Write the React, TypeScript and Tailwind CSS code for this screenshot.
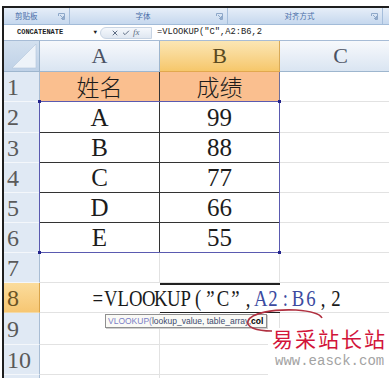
import { Check, X } from "lucide-react"

const table = [
  { n: 1, h: "h-[30px]", a: "姓名", b: "成绩" },
  { n: 2, h: "h-[31px]", a: "A", b: "99" },
  { n: 3, h: "h-[30px]", a: "B", b: "88" },
  { n: 4, h: "h-[30px]", a: "C", b: "77" },
  { n: 5, h: "h-[30px]", a: "D", b: "66" },
  { n: 6, h: "h-[30px]", a: "E", b: "55" },
]

const formula = [
  { t: "=VLOOKUP(”C”,", blue: false },
  { t: "A2:B6", blue: true },
  { t: ",2", blue: false },
].flatMap((s) => [...s.t].map((c) => ({ c, blue: s.blue })))

function Launcher() {
  return (
    <svg width="7" height="7" viewBox="0 0 7 7" className="shrink-0">
      <path d="M0.5 3V0.5H6.5V6.5H4" fill="none" stroke="#8ea8c9" strokeWidth="1" />
      <path d="M2 2L5.5 5.5M5.5 3V5.5H3" fill="none" stroke="#8ea8c9" strokeWidth="1" />
    </svg>
  )
}

function RowHead({ n, active }: { n?: number; active?: boolean }) {
  return (
    <div
      className={`flex w-[36px] shrink-0 items-center border-r border-b pl-[3px] text-[24px] leading-none ${
        active
          ? "border-r-[#d9a44a] border-b-[#f3d9a6] bg-gradient-to-b from-[#fbdc9c] to-[#f6c672] text-[#6a5424]"
          : "border-r-[#a9bdd4] border-b-[#f4f7fb] bg-[#e0e9f4] text-[#5a5a5a]"
      }`}
    >
      {n}
    </div>
  )
}

function EmptyRow({ n, h }: { n?: number; h: string }) {
  return (
    <div className={`flex ${h}`}>
      <RowHead n={n} />
      <div className="w-[120px] shrink-0 border-r border-b border-[#e2e2e2]" />
      <div className="w-[120px] shrink-0 border-r border-b border-[#e2e2e2]" />
      <div className="w-[121px] shrink-0 border-b border-[#e2e2e2]" />
    </div>
  )
}

export default function App() {
  return (
    <div className="relative h-[378px] w-[389px] overflow-hidden bg-white font-['Liberation_Serif','Noto_Sans_CJK_SC',serif]">
      <div className="h-[6px] bg-white" />
      <div className="ml-[2px] border-t-2 border-l-2 border-[#1e1e1e]">
        {/* ribbon group captions */}
        <div className="flex h-[17px] border-b border-[#a2bbd8] bg-gradient-to-b from-[#e6eef8] to-[#c6d8ee] font-['Noto_Sans_CJK_SC',sans-serif] text-[7.5px] leading-none text-[#4a6ea8]">
          <div className="flex w-[66px] items-center border-r border-[#a6bedb] pl-[11px] pr-[4px]">
            <span className="flex-1">剪贴板</span>
            <Launcher />
          </div>
          <div className="flex w-[158px] items-center border-r border-[#a6bedb] pr-[4px]">
            <span className="flex-1 text-center">字体</span>
            <Launcher />
          </div>
          <div className="flex w-[155px] items-center border-r border-[#a6bedb] pr-[4px]">
            <span className="flex-1 text-center">对齐方式</span>
            <Launcher />
          </div>
        </div>

        {/* formula bar */}
        <div className="flex h-[16px] items-center border-b border-[#a7bcd6] bg-white">
          <div className="flex w-[96px] items-center pl-[13px] pr-[3px] font-['Liberation_Mono',monospace] text-[7px] font-bold leading-none text-[#1e1e1e]">
            <span className="flex-1">CONCATENATE</span>
            <span className="text-[6px]">▼</span>
          </div>
          <div className="flex h-[12px] w-[52px] items-center gap-[3px] rounded-l-full border border-[#c8d4e3] bg-gradient-to-b from-[#f5f8fc] to-[#dfe7f1] pl-[10px] text-[#5e6d84]">
            <X size={8} strokeWidth={3} />
            <Check size={8} strokeWidth={3} />
            <span className="text-[9px] italic leading-none">fx</span>
          </div>
          <div className="pl-[5px] font-['Liberation_Mono',monospace] text-[8.75px] leading-none text-[#222]">
            =VLOOKUP("C",A2:B6,2
          </div>
        </div>

        {/* column headers */}
        <div className="flex h-[31px] text-[22px] leading-none">
          <div className="relative w-[36px] shrink-0 border-r border-b border-[#9eb6ce] bg-gradient-to-b from-[#d3e0ef] to-[#bfd1e7]">
            <svg width="36" height="30" viewBox="0 0 36 30" className="absolute inset-0">
              <path d="M8 27L32 3V27Z" fill="#eef3f9" stroke="#b3c6dc" strokeWidth="0.6" />
            </svg>
          </div>
          <div className="flex w-[120px] shrink-0 items-center justify-center border-r border-b border-[#9eb6ce] bg-gradient-to-b from-[#f7f9fc] to-[#dae5f2] text-[#4b5263]">
            A
          </div>
          <div className="flex w-[120px] shrink-0 items-center justify-center border-r border-b border-r-[#d8aa58] border-b-[#e2a84e] bg-gradient-to-b from-[#fbe6b4] to-[#f6c76a] text-[#5b4a20]">
            B
          </div>
          <div className="flex w-[121px] shrink-0 items-center justify-center border-b border-[#9eb6ce] bg-gradient-to-b from-[#f7f9fc] to-[#dae5f2] text-[#4b5263]">
            C
          </div>
        </div>

        {/* sheet body */}
        <div className="relative">
          {table.map((r) => (
            <div key={r.n} className={`flex ${r.h}`}>
              <RowHead n={r.n} />
              <div
                className={`flex w-[120px] shrink-0 items-center justify-center border-r border-b border-[#333] leading-none text-[#1c1c1c] ${
                  r.n === 1 ? "bg-[#fabf8f] font-['Noto_Sans_CJK_SC',serif] text-[23px] font-light" : "text-[25px]"
                }`}
              >
                {r.a}
              </div>
              <div
                className={`flex w-[120px] shrink-0 items-center justify-center border-r border-b border-r-[#6f6f9a] border-b-[#333] leading-none text-[#1c1c1c] ${
                  r.n === 1 ? "bg-[#fabf8f] font-['Noto_Sans_CJK_SC',serif] text-[23px] font-light" : "text-[25px]"
                }`}
              >
                {r.b}
              </div>
              <div className="w-[121px] shrink-0 border-b border-[#e2e2e2]" />
            </div>
          ))}

          {/* range reference A2:B6 */}
          <div className="pointer-events-none absolute top-[29px] left-[35px] h-[152px] w-[241px] border border-[#5a5ab0]">
            <span className="absolute -top-[2px] -left-[2px] h-[3px] w-[3px] bg-[#23238c]" />
            <span className="absolute -top-[2px] -right-[2px] h-[3px] w-[3px] bg-[#23238c]" />
            <span className="absolute -bottom-[2px] -left-[2px] h-[3px] w-[3px] bg-[#23238c]" />
            <span className="absolute -right-[2px] -bottom-[2px] h-[3px] w-[3px] bg-[#23238c]" />
          </div>

          <EmptyRow n={7} h="h-[30px]" />

          {/* row 8, editing B8 */}
          <div className="relative flex h-[30px]">
            <RowHead n={8} active />
            <div className="w-[120px] shrink-0 border-b border-[#e2e2e2]" />
            <div className="w-[120px] shrink-0 border-t-2 border-b border-[#222]" />
            <div className="w-[121px] shrink-0 border-b border-[#e2e2e2]" />
            <div className="absolute top-0 left-[88px] flex h-full items-center text-[24px] leading-none text-[#1a1a1a]">
              {formula.map((ch, i) => (
                <span key={i} className={`flex w-[12.5px] justify-center ${ch.blue ? "text-[#3b4aa0]" : ""}`}>
                  <span className="inline-block scale-x-[0.78]">{ch.c}</span>
                </span>
              ))}
            </div>
          </div>

          <div className="relative">
            <EmptyRow n={9} h="h-[32px]" />
            <div className="absolute top-[1px] left-[101px] flex h-[14px] items-center border border-[#8f8f8f] bg-[#fafaf6] pr-[3px] pl-[2px] font-['Liberation_Sans',sans-serif] text-[8.5px] leading-none text-[#3c4a6e] shadow-[1px_1px_0_#cfcfcf]">
              <span className="text-[#7b80c6]">VLOOKUP(</span>
              <span>lookup_value, table_array, </span>
              <span className="font-bold text-black">col</span>
            </div>
          </div>
          <EmptyRow n={10} h="h-[30px]" />
          <EmptyRow h="h-[30px]" />
        </div>
      </div>

      {/* site watermark */}
      <div className="absolute top-[328px] left-[268px] h-[50px] w-[121px] bg-white">
        <div className="pl-[4px] font-['Noto_Sans_CJK_SC',serif] text-[21px] leading-none tracking-[2px] text-[#d2143a]">
          易采站长站
        </div>
        <div className="mt-[5px] pl-[7px] font-['Liberation_Mono',monospace] text-[14px] leading-none text-[#a3a3a3]">
          www.easck.com
        </div>
      </div>
      <svg width="90" height="34" viewBox="0 0 90 34" className="absolute top-[304px] left-[238px]">
        <path
          d="M34 27C18 27 8 23 10 17C13 9 35 5 58 6C72 7 82 10 84 14"
          fill="none"
          stroke="#b03040"
          strokeWidth="1.6"
        />
      </svg>
    </div>
  )
}
